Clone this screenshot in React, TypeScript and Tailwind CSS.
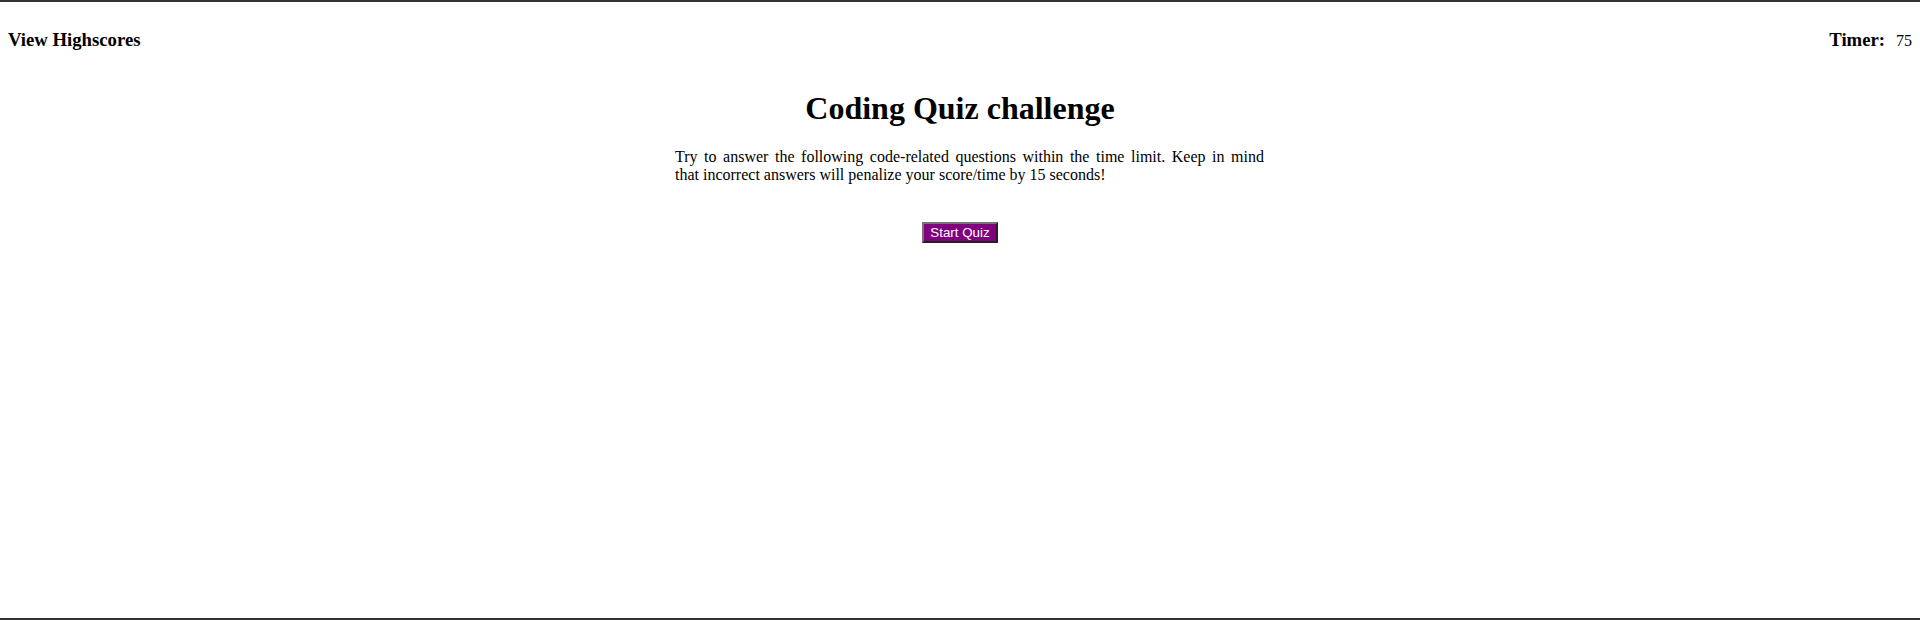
import React from 'react'

// Start screen of the coding quiz: header bar, title, rules, start button.
export default function App() {
  return (
    <div className="h-[620px] border-y-2 border-[#333] bg-white font-['Liberation_Serif',serif] text-black">
      {/* ── Header: highscores link + timer ── */}
      <header className="flex items-baseline justify-between px-2 pt-[27px]">
        <h3 className="text-[18.72px] font-bold leading-[normal]">View Highscores</h3>
        <div className="flex items-baseline gap-[11px]">
          <h3 className="text-[18.72px] font-bold leading-[normal]">Timer:</h3>
          <span className="text-base leading-[normal]">75</span>
        </div>
      </header>

      {/* ── Intro ── */}
      <main className="flex flex-col items-center">
        <h1 className="mt-[39px] text-[32px] font-bold leading-[normal]">Coding Quiz challenge</h1>
        <p className="mt-[21px] ml-[19px] w-[589px] text-base leading-[normal]">
          <span className="block text-justify [text-align-last:justify]">
            Try to answer the following code-related questions within the time limit. Keep in mind
          </span>
          <span className="block">that incorrect answers will penalize your score/time by 15 seconds!</span>
        </p>
        <button className="mt-[38px] border-2 border-[#767676] [border-style:outset] bg-[#800080] px-[6px] py-[1px] font-['Liberation_Sans',Arial,sans-serif] text-[13.33px] leading-[normal] text-white">
          Start Quiz
        </button>
      </main>
    </div>
  )
}
